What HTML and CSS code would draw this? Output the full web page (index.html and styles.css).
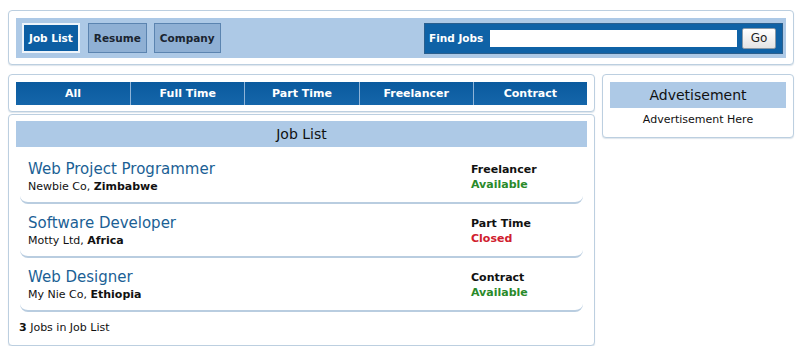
FILE: index.html
```html
<!DOCTYPE html>
<html lang="en">

<head>
    <meta charset="UTF-8" />
    <meta name="viewport" content="width=device-width, initial-scale=1.0" />
    <title>Job List</title>
    <link rel="stylesheet" href="styles.css">
</head>

<body>
    <div class="page">
        <div class="box top-box">
            <div class="top-bar">
                <nav class="main-nav">
                    <a class="nav-btn active" href="#">Job List</a>
                    <a class="nav-btn" href="#">Resume</a>
                    <a class="nav-btn" href="#">Company</a>
                </nav>
                <form class="search" onsubmit="return false">
                    <label for="q">Find Jobs</label>
                    <input type="text" id="q" />
                    <button type="submit">Go</button>
                </form>
            </div>
        </div>

        <div class="columns">
            <div class="main-col">
                <div class="box filter-box">
                    <div class="tabs">
                        <a href="#">All</a>
                        <a href="#">Full Time</a>
                        <a href="#">Part Time</a>
                        <a href="#">Freelancer</a>
                        <a href="#">Contract</a>
                    </div>
                </div>

                <div class="box list-box">
                    <h3 class="bar-title">Job List</h3>

                    <div class="job">
                        <div class="job-info">
                            <a class="job-title" href="#">Web Project Programmer</a>
                            <div class="job-company">Newbie Co, <strong>Zimbabwe</strong></div>
                        </div>
                        <div class="job-meta">
                            <div class="job-type">Freelancer</div>
                            <div class="status open">Available</div>
                        </div>
                    </div>

                    <div class="job">
                        <div class="job-info">
                            <a class="job-title" href="#">Software Developer</a>
                            <div class="job-company">Motty Ltd, <strong>Africa</strong></div>
                        </div>
                        <div class="job-meta">
                            <div class="job-type">Part Time</div>
                            <div class="status closed">Closed</div>
                        </div>
                    </div>

                    <div class="job">
                        <div class="job-info">
                            <a class="job-title" href="#">Web Designer</a>
                            <div class="job-company">My Nie Co, <strong>Ethiopia</strong></div>
                        </div>
                        <div class="job-meta">
                            <div class="job-type">Contract</div>
                            <div class="status open">Available</div>
                        </div>
                    </div>

                    <p class="list-count"><strong>3</strong> Jobs in Job List</p>
                </div>
            </div>

            <div class="side-col">
                <div class="box ad-box">
                    <h3 class="bar-title">Advetisement</h3>
                    <p class="ad-text">Advertisement Here</p>
                </div>
            </div>
        </div>
    </div>
</body>

</html>
```

FILE: styles.css
```css
body {
    font-family: "DejaVu Sans", Verdana, sans-serif;
    margin: 0;
    background: white;
    color: #111;
}

.page {
    width: 786px;
    margin: 10px 0 0 8px;
}

.box {
    border: 1px solid #bccfe0;
    border-radius: 4px;
    background: white;
    box-shadow: 0 1px 1px rgba(120, 150, 180, 0.25);
}

/* top navigation */

.top-box {
    padding: 7px 7px 6px;
}

.top-bar {
    background: #adc9e6;
    height: 40px;
    display: flex;
    align-items: center;
    justify-content: space-between;
    padding: 0 3px 0 6px;
}

.main-nav {
    display: flex;
    gap: 7px;
}

.nav-btn {
    display: block;
    height: 28px;
    line-height: 28px;
    padding: 0 5px;
    font-size: 10.5px;
    font-weight: bold;
    color: #1a2430;
    text-decoration: none;
    background: #8fb0d4;
    border: 1px solid #5b84b0;
}

.nav-btn.active {
    color: white;
    background: #0c5ea3;
    border: 2px solid #eef4fa;
    height: 26px;
    line-height: 26px;
    padding: 0 5px;
    margin-right: 1px;
}

.search {
    display: flex;
    align-items: center;
    width: 359px;
    height: 31px;
    padding: 0 6px 0 4px;
    background: #0f62a6;
    border: 1px solid #2a5f8e;
    box-sizing: border-box;
}

.search label {
    flex-shrink: 0;
    white-space: nowrap;
    color: white;
    font-size: 10.5px;
    font-weight: bold;
    width: 61px;
}

.search input {
    width: 248px;
    height: 17px;
    border: none;
    padding: 0;
    box-sizing: border-box;
}

.search button {
    margin-left: 5px;
    width: 34px;
    height: 21px;
    font-family: "DejaVu Sans", sans-serif;
    font-size: 12px;
    color: #222;
    background: linear-gradient(#ffffff, #e4e4e4);
    border: 1px solid #8a9aa8;
    border-radius: 2px;
    padding: 0;
}

/* columns */

.columns {
    display: flex;
    gap: 7px;
    margin-top: 9px;
    align-items: flex-start;
}

.main-col {
    width: 587px;
    display: flex;
    flex-direction: column;
    gap: 2px;
}

.side-col {
    flex: 1;
}

.filter-box {
    padding: 7px 7px 6px;
}

.tabs {
    display: grid;
    grid-template-columns: repeat(5, 1fr);
    background: linear-gradient(#0a5a9e, #1566aa);
}

.tabs a {
    display: block;
    height: 23px;
    line-height: 23px;
    text-align: center;
    color: white;
    font-size: 11px;
    font-weight: bold;
    text-decoration: none;
    border-left: 1px solid #8fb4d8;
}

.tabs a:first-child {
    border-left: none;
}

.bar-title {
    margin: 0;
    height: 26px;
    line-height: 26px;
    background: #adc9e6;
    text-align: center;
    font-size: 14px;
    font-weight: normal;
    color: #111;
}

/* job list */

.list-box {
    padding: 6px 7px 0;
}

.list-box .bar-title {
    margin-bottom: 3px;
}

.job {
    display: flex;
    justify-content: space-between;
    margin: 0 4px;
    padding: 9px 0 7px 8px;
    height: 36px;
    border-bottom: 2px solid #b9cde0;
    border-radius: 0 0 8px 8px;
}

.job-title {
    display: block;
    font-size: 15px;
    line-height: 20px;
    color: #1b5f95;
    text-decoration: none;
}

.job-company {
    font-size: 11px;
    line-height: 16px;
}

.job-meta {
    width: 112px;
    margin-top: 3px;
    font-size: 11px;
    font-weight: bold;
    line-height: 15px;
}

.status.open {
    color: #2a8a2a;
}

.status.closed {
    color: #d0202e;
}

.list-count {
    margin: 0;
    padding: 9px 3px 10px;
    font-size: 11px;
    line-height: 14px;
}

/* advertisement */

.ad-box {
    padding: 7px 7px 9px;
}

.ad-text {
    margin: 4px 0 0;
    text-align: center;
    font-size: 11px;
    line-height: 16px;
}
```
